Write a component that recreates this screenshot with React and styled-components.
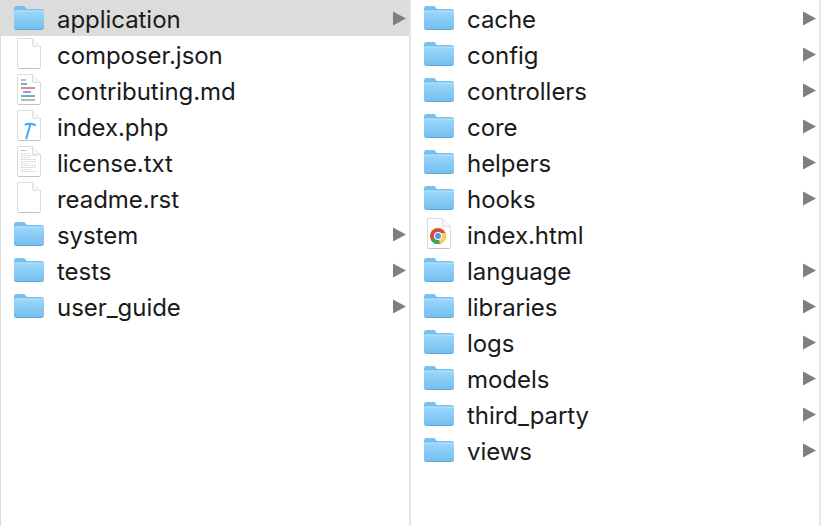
import React from "react";
import styled, { createGlobalStyle } from "styled-components";

const Global = createGlobalStyle`
  html, body { margin: 0; padding: 0; background: #fff; }
  body { width: 830px; height: 526px; overflow: hidden; font-family: Inter, "Liberation Sans", sans-serif; }
`;

const Browser = styled.div`
  display: flex;
  width: 821px;
  height: 526px;
  background: #fff;
  border-left: 1px solid #dedede;
  border-right: 2px solid #e6e6e6;
  box-sizing: border-box;
`;

const Column = styled.div`
  flex: ${(p) => (p.$divider ? "none" : "1 1 0")};
  width: ${(p) => (p.$divider ? "410px" : "auto")};
  box-sizing: border-box;
  border-right: ${(p) => (p.$divider ? "2px solid #e6e6e6" : "none")};
  min-width: 0;
`;

const Row = styled.div`
  display: flex;
  align-items: center;
  height: 36px;
  background: ${(p) => (p.$selected ? "#dcdcdc" : "transparent")};
  padding-left: 12px;
`;

const IconSlot = styled.div`
  width: 32px;
  height: 32px;
  flex: none;
  display: flex;
  align-items: center;
  justify-content: center;
`;

const Name = styled.span`
  flex: 1;
  margin-left: 12px;
  padding-top: 4px;
  font-size: 24px;
  letter-spacing: -0.05px;
  line-height: 32px;
  color: #1a1a1a;
  white-space: nowrap;
`;

const Arrow = styled.svg`
  width: 13px;
  height: 15px;
  flex: none;
  margin-right: 3px;
`;

function Folder() {
  return (
    <svg width="32" height="26" viewBox="0 1 32 26">
      <defs>
        <linearGradient id="fb" x1="0" y1="0" x2="0" y2="1">
          <stop offset="0" stopColor="#9ad6fa" />
          <stop offset="1" stopColor="#74bff1" />
        </linearGradient>
      </defs>
      <path d="M1 23V4.500C1 3 2 2 3.500 2H10c1.200 0 1.800.5 2.600 1.400L14 5h14.500C30 5 31 6 31 7.500V23c0 1.500-1 2.500-2.500 2.500h-25C2 25.500 1 24.500 1 23z" fill="#78c0f1" />
      <path d="M1 23.500V8.500C1 7.500 1.800 7 2.800 7h26.400c1 0 1.800.5 1.800 1.500V23c0 1.500-1 2.500-2.500 2.500h-25C2 25.500 1 24.800 1 23.500z" fill="url(#fb)" />
      <path d="M1 8.500C1 7.500 1.800 7 2.800 7h26.400c1 0 1.800.5 1.800 1.500" fill="none" stroke="#c0e6fc" strokeWidth="1" />
      <path d="M1.500 24.500c.5.7 1.200 1 2 1h25c.8 0 1.500-.3 2-1" fill="none" stroke="#5fa6d8" strokeWidth="1" />
    </svg>
  );
}

function Sheet({ children }) {
  return (
    <svg width="26" height="32" viewBox="0 0 26 32">
      <path d="M1.500 0.500h15l8 8v20.500a1.500 1.500 0 0 1-1.500 1.500H3a1.500 1.500 0 0 1-1.500-1.500z" fill="#fff" stroke="#dcdcdc" />
      <path d="M2.500 30.500h21" stroke="#c4c4c4" />
      <path d="M16.500 0.500v6.500a1.500 1.500 0 0 0 1.500 1.500h6.500" fill="#f7f7f7" stroke="#dcdcdc" />
      {children}
    </svg>
  );
}

function MdDoc() {
  return (
    <Sheet>
      <path d="M5 6h5" stroke="#a8a8a8" strokeWidth="1.500" />
      <path d="M5 10h6" stroke="#5ba9b8" strokeWidth="1.800" />
      <path d="M5 14h14" stroke="#c9848a" strokeWidth="1.800" />
      <path d="M7 18h8" stroke="#a97df0" strokeWidth="1.800" />
      <path d="M5 22h14" stroke="#5ba9b8" strokeWidth="1.800" />
      <path d="M5 26h14" stroke="#b0b0b0" strokeWidth="1.800" />
    </Sheet>
  );
}

function PhpDoc() {
  return (
    <Sheet>
      <path d="M9.500 14.500c3-1 6.500-.8 9.500 .5M14.300 14.500L10.300 28.500" fill="none" stroke="#44a5f2" strokeWidth="2" strokeLinecap="round" />
    </Sheet>
  );
}

function TxtDoc() {
  const lines = [7, 9, 11, 13, 15, 17, 19, 21, 23, 25];
  return (
    <Sheet>
      <path d="M5 4.500h5" stroke="#bbb" strokeWidth="1" />
      {lines.map((y, i) => (
        <path key={y} d={`M5 ${y}.5h${i % 3 === 2 ? 9 : y < 9 ? 9 : 15}`} stroke="#d4d4d4" strokeWidth="0.900" strokeDasharray="2 .6" />
      ))}
    </Sheet>
  );
}

function ChromeDoc() {
  return (
    <Sheet>
      <g transform="translate(12 18)">
        <circle r="8" fill="#dd4b3e" />
        <path d="M0 0L-7 4A8 8 0 0 0 1.900 7.800z" fill="#3aa757" />
        <path d="M0 0L1.900 7.800A8 8 0 0 0 7.400-3L0-3z" fill="#fbd24e" />
        <circle r="4" fill="#fff" />
        <circle r="3" fill="#5a93ee" />
      </g>
    </Sheet>
  );
}

const Chevron = () => (
  <Arrow viewBox="0 0 13 15">
    <path d="M0 0.500L13 7.500L0 14.500z" fill="#7f7f7f" />
  </Arrow>
);

const icons = { folder: Folder, blank: Sheet, md: MdDoc, php: PhpDoc, txt: TxtDoc, chrome: ChromeDoc };

const left = [
  ["application", "folder", true],
  ["composer.json", "blank"],
  ["contributing.md", "md"],
  ["index.php", "php"],
  ["license.txt", "txt"],
  ["readme.rst", "blank"],
  ["system", "folder"],
  ["tests", "folder"],
  ["user_guide", "folder"],
];

const right = ["cache", "config", "controllers", "core", "helpers", "hooks", "index.html", "language", "libraries", "logs", "models", "third_party", "views"].map((n) => [
  n,
  n === "index.html" ? "chrome" : "folder",
]);

function Item({ name, icon, selected }) {
  const Icon = icons[icon];
  return (
    <Row $selected={selected}>
      <IconSlot>
        <Icon />
      </IconSlot>
      <Name>{name}</Name>
      {icon === "folder" && <Chevron />}
    </Row>
  );
}

export default function App() {
  return (
    <>
      <Global />
      <Browser>
        <Column $divider>
          {left.map(([n, i, s]) => (
            <Item key={n} name={n} icon={i} selected={s} />
          ))}
        </Column>
        <Column>
          {right.map(([n, i]) => (
            <Item key={n} name={n} icon={i} />
          ))}
        </Column>
      </Browser>
    </>
  );
}
